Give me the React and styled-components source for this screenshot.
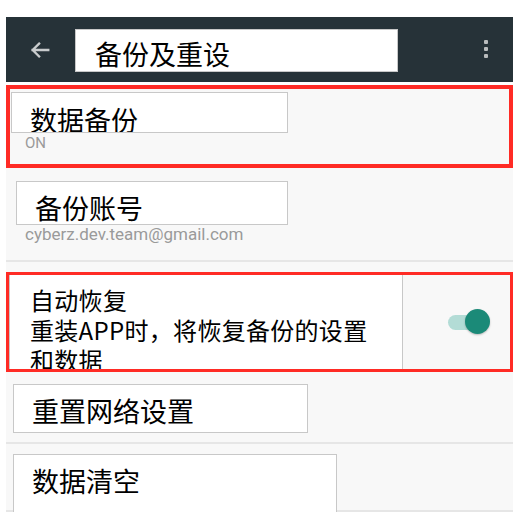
import styled, { createGlobalStyle } from "styled-components";

const GlobalStyle = createGlobalStyle`
	body {
		margin: 0;
		background: #ffffff;
		font-family: "Noto Sans CJK SC", "Noto Sans", sans-serif;
	}
`;

const App = () => {
	return (
		<>
			<GlobalStyle />
			<Frame>
				<AppBar>
					<BackIcon viewBox="0 0 24 24">
						<path d="M21 12H4M11 5l-7 7 7 7" />
					</BackIcon>
					<TitleBox>备份及重设</TitleBox>
					<Kebab>
						<span />
						<span />
						<span />
					</Kebab>
				</AppBar>
				<List>
					<Item $highlight $top={3} $height={83}>
						<LabelBox $left={1} $top={3} $width={277} $height={41} $pad={13}>
							数据备份
						</LabelBox>
						<Summary $left={15} $size={15} $top={2}>
							ON
						</Summary>
					</Item>
					<Item $height={94} $divider>
						<LabelBox $left={10} $top={13} $width={272} $height={44} $pad={12}>
							备份账号
						</LabelBox>
						<Summary $left={19} $size={17} $top={1}>
							cyberz.dev.team@gmail.com
						</Summary>
					</Item>
					<ToggleItem>
						<MultiLineBox>
							自动恢复
							<br />
							重装APP时，将恢复备份的设置
							<br />
							和数据
						</MultiLineBox>
						<Switch>
							<Track />
							<Thumb />
						</Switch>
					</ToggleItem>
					<Item $height={72} $divider>
						<LabelBox $left={7} $top={12} $width={295} $height={49} $pad={12}>
							重置网络设置
						</LabelBox>
					</Item>
					<Item $height={68} $divider>
						<LabelBox $left={7} $top={10} $width={324} $height={63} $pad={12}>
							数据清空
						</LabelBox>
					</Item>
				</List>
			</Frame>
		</>
	);
};

const Frame = styled.div`
	width: 507px;
	margin-left: 6px;
	padding-top: 17px;
`;

const AppBar = styled.header`
	display: flex;
	align-items: center;
	height: 65px;
	background: #263238;
`;

const BackIcon = styled.svg`
	width: 22px;
	height: 22px;
	margin-left: 23px;
	fill: none;
	stroke: #c9cccd;
	stroke-width: 2.6;
	stroke-linecap: square;
`;

const TitleBox = styled.div`
	box-sizing: border-box;
	width: 323px;
	height: 43px;
	margin-left: 24px;
	margin-top: 1px;
	padding: 10px 0 0 19px;
	background: #ffffff;
	border: 1.5px solid #c8c8c8;
	color: #000000;
	font-size: 27px;
	line-height: 27px;
	overflow: hidden;
	white-space: nowrap;
`;

const Kebab = styled.div`
	display: flex;
	flex-direction: column;
	gap: 3px;
	margin-left: auto;
	margin-right: 25px;
	margin-top: -2px;

	span {
		width: 4px;
		height: 4px;
		border-radius: 1px;
		background: #b9bcbd;
	}
`;

const List = styled.div`
	background: #f8f8f8;
`;

const Item = styled.div`
	box-sizing: border-box;
	display: flex;
	flex-direction: column;
	align-items: flex-start;
	height: ${(p) => p.$height}px;
	margin-top: ${(p) => p.$top || 0}px;
	border: ${(p) => (p.$highlight ? "4px solid #ff2b25" : "none")};
	border-bottom: ${(p) =>
		p.$highlight ? "4px solid #ff2b25" : p.$divider ? "2px solid #e6e6e6" : "none"};
	background: #f8f8f8;
`;

const LabelBox = styled.div`
	box-sizing: border-box;
	flex-shrink: 0;
	width: ${(p) => p.$width}px;
	height: ${(p) => p.$height}px;
	margin-left: ${(p) => p.$left}px;
	margin-top: ${(p) => p.$top}px;
	padding: ${(p) => p.$pad}px 0 0 18px;
	background: #ffffff;
	border: 1.5px solid #c8c8c8;
	color: #000000;
	font-size: 27px;
	line-height: 27px;
	overflow: hidden;
	white-space: nowrap;
`;

const Summary = styled.div`
	margin-left: ${(p) => p.$left}px;
	margin-top: ${(p) => p.$top}px;
	font-family: Roboto, "Liberation Sans", sans-serif;
	font-size: ${(p) => p.$size}px;
	line-height: 17px;
	color: #9a9a9a;
`;

const ToggleItem = styled.div`
	box-sizing: border-box;
	display: flex;
	align-items: center;
	height: 100px;
	margin-top: 10px;
	border: 3px solid #ff2b25;
`;

const MultiLineBox = styled.div`
	box-sizing: border-box;
	align-self: stretch;
	width: 394px;
	padding: 10px 0 0 20px;
	background: #ffffff;
	border: 1.5px solid #c8c8c8;
	border-top: none;
	border-bottom: none;
	color: #000000;
	font-size: 24px;
	line-height: 30px;
	letter-spacing: 0.3px;
	overflow: hidden;
	white-space: nowrap;
`;

const Switch = styled.div`
	position: relative;
	width: 42px;
	height: 26px;
	margin-left: auto;
	margin-right: 20px;
`;

const Track = styled.div`
	position: absolute;
	left: 0;
	top: 6px;
	width: 36px;
	height: 15px;
	border-radius: 8px;
	background: #b3dcd6;
`;

const Thumb = styled.div`
	position: absolute;
	right: 0;
	top: 0;
	width: 25px;
	height: 25px;
	border-radius: 50%;
	background: #1b8a78;
	box-shadow: 0 1px 2px rgba(0, 0, 0, 0.25);
`;

export default App;
